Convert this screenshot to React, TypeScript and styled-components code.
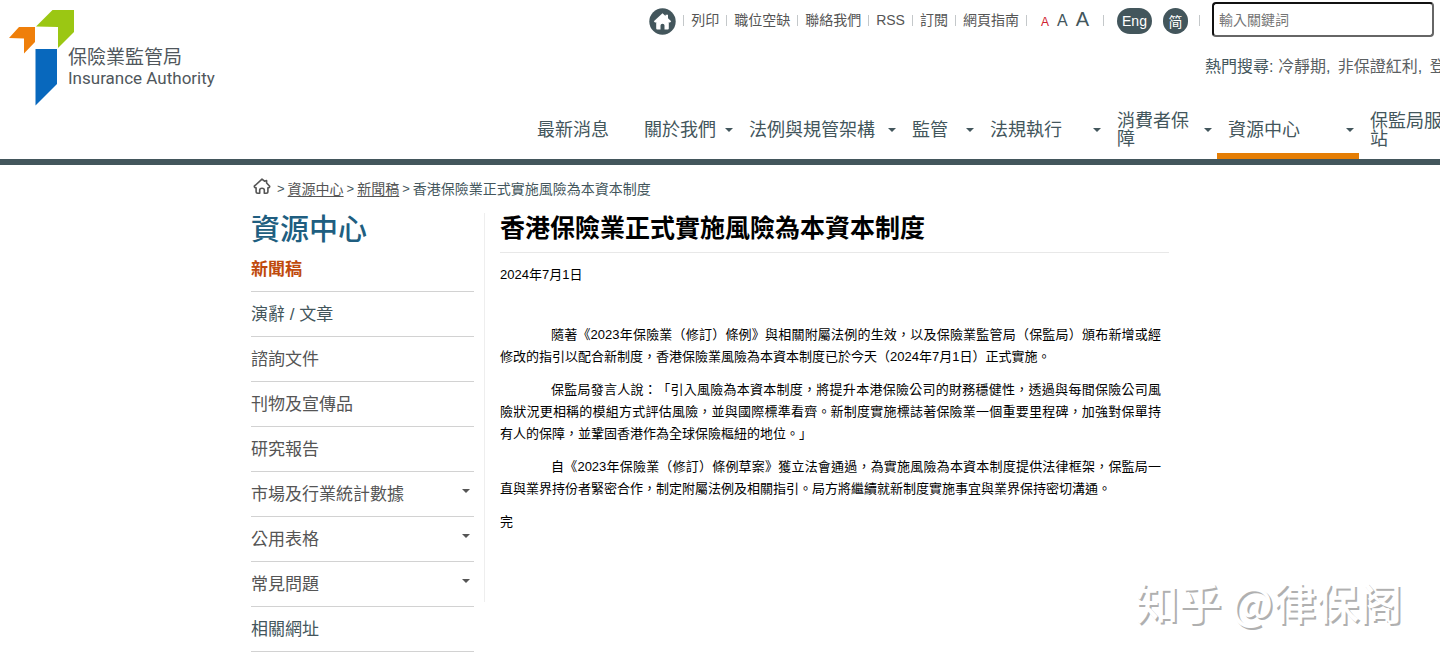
import React from 'react';
import styled, { createGlobalStyle } from 'styled-components';

const slate = '#43565c';

const GlobalStyle = createGlobalStyle`
  * { box-sizing: border-box; }
  body {
    margin: 0;
    background: #fff;
    color: #000;
    overflow-x: hidden;
    font-family: "Liberation Sans", "Noto Sans CJK TC", sans-serif;
    text-spacing-trim: space-all;
  }
  a { color: inherit; text-decoration: none; }
  ul, ol { list-style: none; margin: 0; padding: 0; }
  h1, h2, p { margin: 0; }
`;

const Page = styled.div`
  position: relative;
  min-height: 662px;
  overflow: hidden;
`;

const Header = styled.header`
  display: flex;
  justify-content: space-between;
  border-bottom: 6px solid ${slate};
`;

const Logo = styled.a`
  display: flex;
  flex: none;
  align-items: flex-start;
  padding: 10px 0 0 9px;
`;

const LogoText = styled.span`
  display: flex;
  flex-direction: column;
  margin: 37px 0 0 -7px;
  color: #50575c;
  font-size: 19px;
  line-height: 22px;
`;

const LogoLatin = styled.span`
  font-family: Roboto, sans-serif;
  font-size: 17px;
  line-height: 18px;
`;

const HeaderRight = styled.div`
  display: flex;
  flex: none;
  flex-direction: column;
  width: 914px;
`;

const TopRow = styled.div`
  display: flex;
  justify-content: flex-end;
  height: 100px;
`;

const Utilities = styled.div`
  display: flex;
  align-items: center;
  height: 40px;
  color: #555;
  font-size: 14px;
  white-space: nowrap;
`;

const HomeLink = styled.a`
  display: flex;
  margin: 2px 7px 0 0;
`;

const UtilityList = styled.ul`
  display: flex;
`;

const UtilityItem = styled.li`
  display: flex;
  align-items: center;
  line-height: 20px;
  &::before, &:last-child::after {
    content: "";
    width: 1px;
    height: 11px;
    background: #c4c8ca;
  }
  a { padding: 0 7px; }
`;

const Rule = styled.span`
  width: 1px;
  height: 11px;
  background: #c4c8ca;
`;

const Sizes = styled.div`
  display: flex;
  align-items: baseline;
  gap: 8px;
  margin: 0 14px;
`;

const SizeButton = styled.button<{ $size: number; $active?: boolean }>`
  padding: 0;
  border: 0;
  background: none;
  color: ${p => (p.$active ? '#d0202e' : slate)};
  font-family: inherit;
  font-size: ${p => p.$size}px;
  line-height: 24px;
`;

const Languages = styled.div`
  display: flex;
  gap: 11px;
  margin: 2px 11px 0 13px;
`;

const Language = styled.a<{ $round?: boolean }>`
  display: flex;
  align-items: center;
  justify-content: center;
  width: ${p => (p.$round ? 25 : 35)}px;
  height: 26px;
  border-radius: 13px;
  background: ${slate};
  color: #fff;
  font-size: 14px;
`;

const SearchArea = styled.div`
  flex: none;
  width: 236px;
  margin-left: 4px;
  overflow: hidden;
  white-space: nowrap;
`;

const SearchInput = styled.input`
  display: block;
  width: 222px;
  height: 35px;
  margin: 2px 0 0 8px;
  padding: 0 5px;
  border: 2px inset #666;
  border-radius: 4px;
  background: #fff;
  font-family: inherit;
  font-size: 14px;
  &::placeholder { color: #757575; opacity: 1; }
`;

const Popular = styled.div`
  margin: 18px 0 0 1px;
  color: ${slate};
  font-size: 16px;
  line-height: 24px;
  a { color: #5b6062; }
  a + a { margin-left: 3px; }
`;

const Nav = styled.nav`
  overflow: hidden;
`;

const NavList = styled.ul`
  display: flex;
  height: 59px;
`;

const NavItem = styled.li<{ $width: number; $active?: boolean }>`
  flex: none;
  width: ${p => p.$width}px;
  border-bottom: 6px solid ${p => (p.$active ? '#e57e05' : 'transparent')};
  a {
    display: flex;
    align-items: center;
    justify-content: space-between;
    gap: 8px;
    height: 59px;
    padding: 0 5px 0 11px;
    color: ${slate};
    font-size: 18px;
    line-height: 18px;
  }
`;

const Caret = styled.span`
  flex: none;
  border: 4px solid transparent;
  border-top-color: currentColor;
  border-bottom: 0;
`;

const Content = styled.div`
  width: 100%;
  max-width: 938px;
  margin: 0 auto;
`;

const Breadcrumb = styled.ol`
  display: flex;
  align-items: center;
  height: 48px;
  padding-left: 2px;
  color: ${slate};
  font-size: 14px;
  line-height: 20px;
  white-space: nowrap;
  li { display: flex; align-items: center; }
  li + li::before { content: ">"; margin: 0 3px; font-size: 13px; }
  li:nth-child(2)::before { margin-left: 6px; }
  a { color: #555; text-decoration: underline; text-underline-offset: 2px; }
`;

const Columns = styled.div`
  display: flex;
  align-items: flex-start;
`;

const Sidebar = styled.aside`
  flex: none;
  width: 223px;
`;

const SideTitle = styled.h2`
  color: #205e80;
  font-size: 29px;
  font-weight: 500;
  line-height: 34px;
`;

const SideItem = styled.li<{ $tone?: string; $bold?: boolean }>`
  border-bottom: 1px solid #d2d2d2;
  a {
    display: flex;
    align-items: center;
    justify-content: space-between;
    height: 44px;
    padding: 0 4px 4px 0;
    color: ${p => p.$tone ?? '#555'};
    font-size: 17px;
    font-weight: ${p => (p.$bold ? 700 : 400)};
  }
  ${Caret} { margin-bottom: 2px; }
`;

const Article = styled.article`
  flex: 1;
  min-height: 389px;
  margin-left: 10px;
  padding: 0 20px 0 15px;
  border-left: 1px solid #eee;
`;

const Title = styled.h1`
  padding-bottom: 9px;
  border-bottom: 1px solid #e8e8e8;
  font-size: 25px;
  line-height: 30px;
`;

const DateLine = styled.p`
  margin: 11px 0 38px;
  font-size: 13px;
  line-height: 22px;
`;

const Paragraph = styled.p<{ $indent?: boolean }>`
  max-width: 661px;
  margin-bottom: 11px;
  font-size: 13px;
  line-height: 22px;
  text-align: justify;
  text-indent: ${p => (p.$indent ? 51 : 0)}px;
`;

const Watermark = styled.div`
  position: absolute;
  right: 38px;
  bottom: 31px;
  color: #fff;
  font-family: "Noto Sans CJK SC", sans-serif;
  font-size: 43px;
  font-weight: 500;
  line-height: 60px;
  text-shadow: 2px 2px 0 #b0b0b0;
  white-space: nowrap;
  pointer-events: none;
`;

const utilityLinks = ['列印', '職位空缺', '聯絡我們', 'RSS', '訂閱', '網頁指南'];

const navItems = [
  { label: '最新消息', width: 107, plain: true },
  { label: '關於我們', width: 105 },
  { label: '法例與規管架構', width: 163 },
  { label: '監管', width: 78 },
  { label: '法規執行', width: 127 },
  { label: '消費者保障', width: 111 },
  { label: '資源中心', width: 142, active: true },
  { label: '保監局服務網站', width: 142 },
];

const sideItems: { label: string; tone?: string; bold?: boolean; more?: boolean }[] = [
  { label: '新聞稿', tone: '#c04a0c', bold: true },
  { label: '演辭 / 文章', tone: slate },
  { label: '諮詢文件' },
  { label: '刊物及宣傳品' },
  { label: '研究報告' },
  { label: '市場及行業統計數據', more: true },
  { label: '公用表格', more: true },
  { label: '常見問題', more: true },
  { label: '相關網址', tone: slate },
];

const paragraphs = [
  '隨著《2023年保險業（修訂）條例》與相關附屬法例的生效，以及保險業監管局（保監局）頒布新增或經修改的指引以配合新制度，香港保險業風險為本資本制度已於今天（2024年7月1日）正式實施。',
  '保監局發言人說：「引入風險為本資本制度，將提升本港保險公司的財務穩健性，透過與每間保險公司風險狀況更相稱的模組方式評估風險，並與國際標準看齊。新制度實施標誌著保險業一個重要里程碑，加強對保單持有人的保障，並鞏固香港作為全球保險樞紐的地位。」',
  '自《2023年保險業（修訂）條例草案》獲立法會通過，為實施風險為本資本制度提供法律框架，保監局一直與業界持份者緊密合作，制定附屬法例及相關指引。局方將繼續就新制度實施事宜與業界保持密切溝通。',
];

const LogoMark = () => (
  <svg width="66" height="96" viewBox="0 0 66 96" aria-hidden="true">
    <path d="M0 28 10 17H26V32L15 43.500V28.500Z" fill="#ef7f0a" />
    <path d="M27 16.500 43.500 0H65V22L49 38V17Z" fill="#9bc713" />
    <path d="M26.500 39H48V74L26.500 95.500Z" fill="#0868bd" />
  </svg>
);

const HomeBadge = () => (
  <svg width="27" height="27" viewBox="0 0 27 27" aria-hidden="true">
    <circle cx="13.500" cy="13.500" r="13.200" fill={slate} />
    <path
      d="M13.500 5.300 16.500 8V6.800H19V10.300L22.200 13.300 20.800 14.700 19.800 14V20.500Q19.800 21.500 18.800 21.500H15.500V17.500Q15.500 15.800 13.500 15.800T11.500 17.500V21.500H8.200Q7.200 21.500 7.200 20.500V14L6.200 14.700 4.800 13.300Z"
      fill="#fff"
    />
  </svg>
);

const HomeOutline = () => (
  <svg width="18" height="17" viewBox="0 0 18 17" fill="none" stroke="#555" strokeWidth="1.600" strokeLinejoin="round" aria-hidden="true">
    <path d="M9 1.200 11.500 3.200 13.600 2.600V5L16.700 8.200Q16.800 9.800 14.900 9.800V13.500Q14.900 15.200 13.200 15.200H11.300V12Q11.300 10.300 9 10.300T6.700 12V15.200H4.800Q3.100 15.200 3.100 13.500V9.800Q1.200 9.800 1.300 8.200Z" />
  </svg>
);

export default function App() {
  return (
    <>
      <GlobalStyle />
      <Page lang="zh-Hant">
        <Header>
          <Logo href="#">
            <LogoMark />
            <LogoText>
              保險業監管局
              <LogoLatin>Insurance Authority</LogoLatin>
            </LogoText>
          </Logo>
          <HeaderRight>
            <TopRow>
              <Utilities>
                <HomeLink href="#" aria-label="主頁"><HomeBadge /></HomeLink>
                <UtilityList>
                  {utilityLinks.map(label => (
                    <UtilityItem key={label}><a href="#">{label}</a></UtilityItem>
                  ))}
                </UtilityList>
                <Sizes>
                  <SizeButton type="button" $size={12} $active>A</SizeButton>
                  <SizeButton type="button" $size={16}>A</SizeButton>
                  <SizeButton type="button" $size={20}>A</SizeButton>
                </Sizes>
                <Rule />
                <Languages>
                  <Language href="#">Eng</Language>
                  <Language href="#" lang="zh-Hans" $round>简</Language>
                </Languages>
                <Rule />
              </Utilities>
              <SearchArea>
                <SearchInput type="search" aria-label="輸入關鍵詞" placeholder="輸入關鍵詞" />
                <Popular>
                  熱門搜尋: <a href="#">冷靜期</a>, <a href="#">非保證紅利</a>, <a href="#">登記冊</a>
                </Popular>
              </SearchArea>
            </TopRow>
            <Nav>
              <NavList>
                {navItems.map(item => (
                  <NavItem key={item.label} $width={item.width} $active={item.active}>
                    <a href="#">
                      {item.label}
                      {!item.plain && <Caret />}
                    </a>
                  </NavItem>
                ))}
              </NavList>
            </Nav>
          </HeaderRight>
        </Header>

        <Content>
          <Breadcrumb>
            <li><a href="#" aria-label="主頁"><HomeOutline /></a></li>
            <li><a href="#">資源中心</a></li>
            <li><a href="#">新聞稿</a></li>
            <li>香港保險業正式實施風險為本資本制度</li>
          </Breadcrumb>
          <Columns>
            <Sidebar>
              <SideTitle>資源中心</SideTitle>
              <ul>
                {sideItems.map(item => (
                  <SideItem key={item.label} $tone={item.tone} $bold={item.bold}>
                    <a href="#">
                      {item.label}
                      {item.more && <Caret />}
                    </a>
                  </SideItem>
                ))}
              </ul>
            </Sidebar>
            <Article>
              <Title>香港保險業正式實施風險為本資本制度</Title>
              <DateLine>2024年7月1日</DateLine>
              {paragraphs.map(text => (
                <Paragraph key={text} $indent>{text}</Paragraph>
              ))}
              <Paragraph>完</Paragraph>
            </Article>
          </Columns>
        </Content>
        <Watermark lang="zh-Hans">知乎 @律保阁</Watermark>
      </Page>
    </>
  );
}
